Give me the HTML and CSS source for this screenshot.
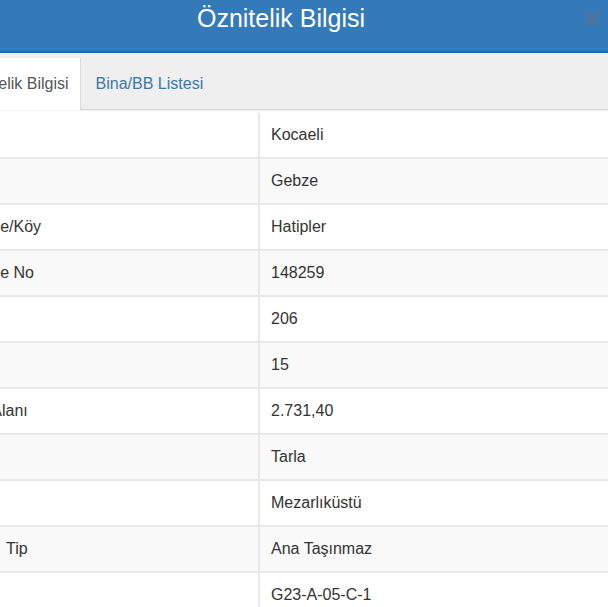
FILE: index.html
```html
<!DOCTYPE html>
<html lang="tr">
<head>
<meta charset="utf-8">
<title>Öznitelik Bilgisi</title>
<link rel="stylesheet" href="styles.css">
</head>
<body>
<div class="modal">
  <div class="modal-header">
    <h1 class="modal-title">Öznitelik Bilgisi</h1>
    <button class="close" type="button" aria-label="Kapat">
      <svg width="17" height="17" viewBox="0 0 17 17"><path d="M3.2 3.2 L13.8 13.8 M13.8 3.2 L3.2 13.8" stroke="currentColor" stroke-width="4.4" stroke-linecap="round"/></svg>
    </button>
  </div>
  <div class="tabs">
    <div class="tab active">Öznitelik Bilgisi</div>
    <div class="tab">Bina/BB Listesi</div>
  </div>
  <div class="table">
    <div class="row"><div class="label">İl</div><div class="value">Kocaeli</div></div>
    <div class="row"><div class="label">İlçe</div><div class="value">Gebze</div></div>
    <div class="row"><div class="label">Mahalle/Köy</div><div class="value">Hatipler</div></div>
    <div class="row"><div class="label">Mahalle No</div><div class="value">148259</div></div>
    <div class="row"><div class="label">Ada</div><div class="value">206</div></div>
    <div class="row"><div class="label">Parsel</div><div class="value">15</div></div>
    <div class="row"><div class="label">Tapu Alanı</div><div class="value">2.731,40</div></div>
    <div class="row"><div class="label">Nitelik</div><div class="value">Tarla</div></div>
    <div class="row"><div class="label">Mevkii</div><div class="value">Mezarlıküstü</div></div>
    <div class="row"><div class="label">Zemin  Tip</div><div class="value">Ana Taşınmaz</div></div>
    <div class="row"><div class="label">Pafta</div><div class="value">G23-A-05-C-1</div></div>
  </div>
</div>
</body>
</html>
```

FILE: styles.css
```css
html, body {
  margin: 0;
  padding: 0;
  background: #ffffff;
  overflow: hidden;
}
body {
  font-family: "Liberation Sans", Arial, sans-serif;
  font-size: 16px;
  color: #333333;
}
.modal {
  width: 680px;
  margin-left: -59px;
}
.modal-header {
  height: 51px;
  background: #347ab8;
  border-bottom: 2px solid #2b679e;
  display: flex;
  align-items: flex-start;
  justify-content: center;
  position: relative;
}
.modal-title {
  margin: 0;
  font-size: 25px;
  font-weight: normal;
  line-height: 36px;
  color: #ffffff;
}
.close {
  position: absolute;
  top: 10px;
  right: 20px;
  padding: 0;
  border: 0;
  background: none;
  color: #4f739a;
  display: flex;
}
.tabs {
  display: flex;
  height: 51px;
  padding-top: 4px;
  padding-left: 7px;
  background: #efefef;
  border-top: 1px solid #e6eef5;
  border-bottom: 1px solid #d3d3d3;
  box-shadow: 0 1px 1px rgba(0, 0, 0, 0.05);
}
.tab {
  display: flex;
  align-items: center;
  padding: 0 15px;
  color: #3a76ab;
  white-space: pre;
}
.tab.active {
  background: #ffffff;
  color: #555555;
  padding: 0 11px 0 12px;
  border-right: 1px solid #dadada;
  border-left: 1px solid #dadada;
  height: 52px;
  margin-bottom: -1px;
}
.table {
  margin-top: 1px;
}
.row {
  display: grid;
  grid-template-columns: 319px 1fr;
  border-top: 2px solid #e8e8e8;
}
.row:first-child {
  border-top-color: transparent;
}
.row:nth-child(even) {
  background: #f9f9f9;
}
.label, .value {
  height: 44px;
  display: flex;
  align-items: center;
  white-space: pre;
}
.label {
  padding-left: 12px;
  border-right: 2px solid #e8e8e8;
}
.value {
  padding-left: 11px;
}
```
